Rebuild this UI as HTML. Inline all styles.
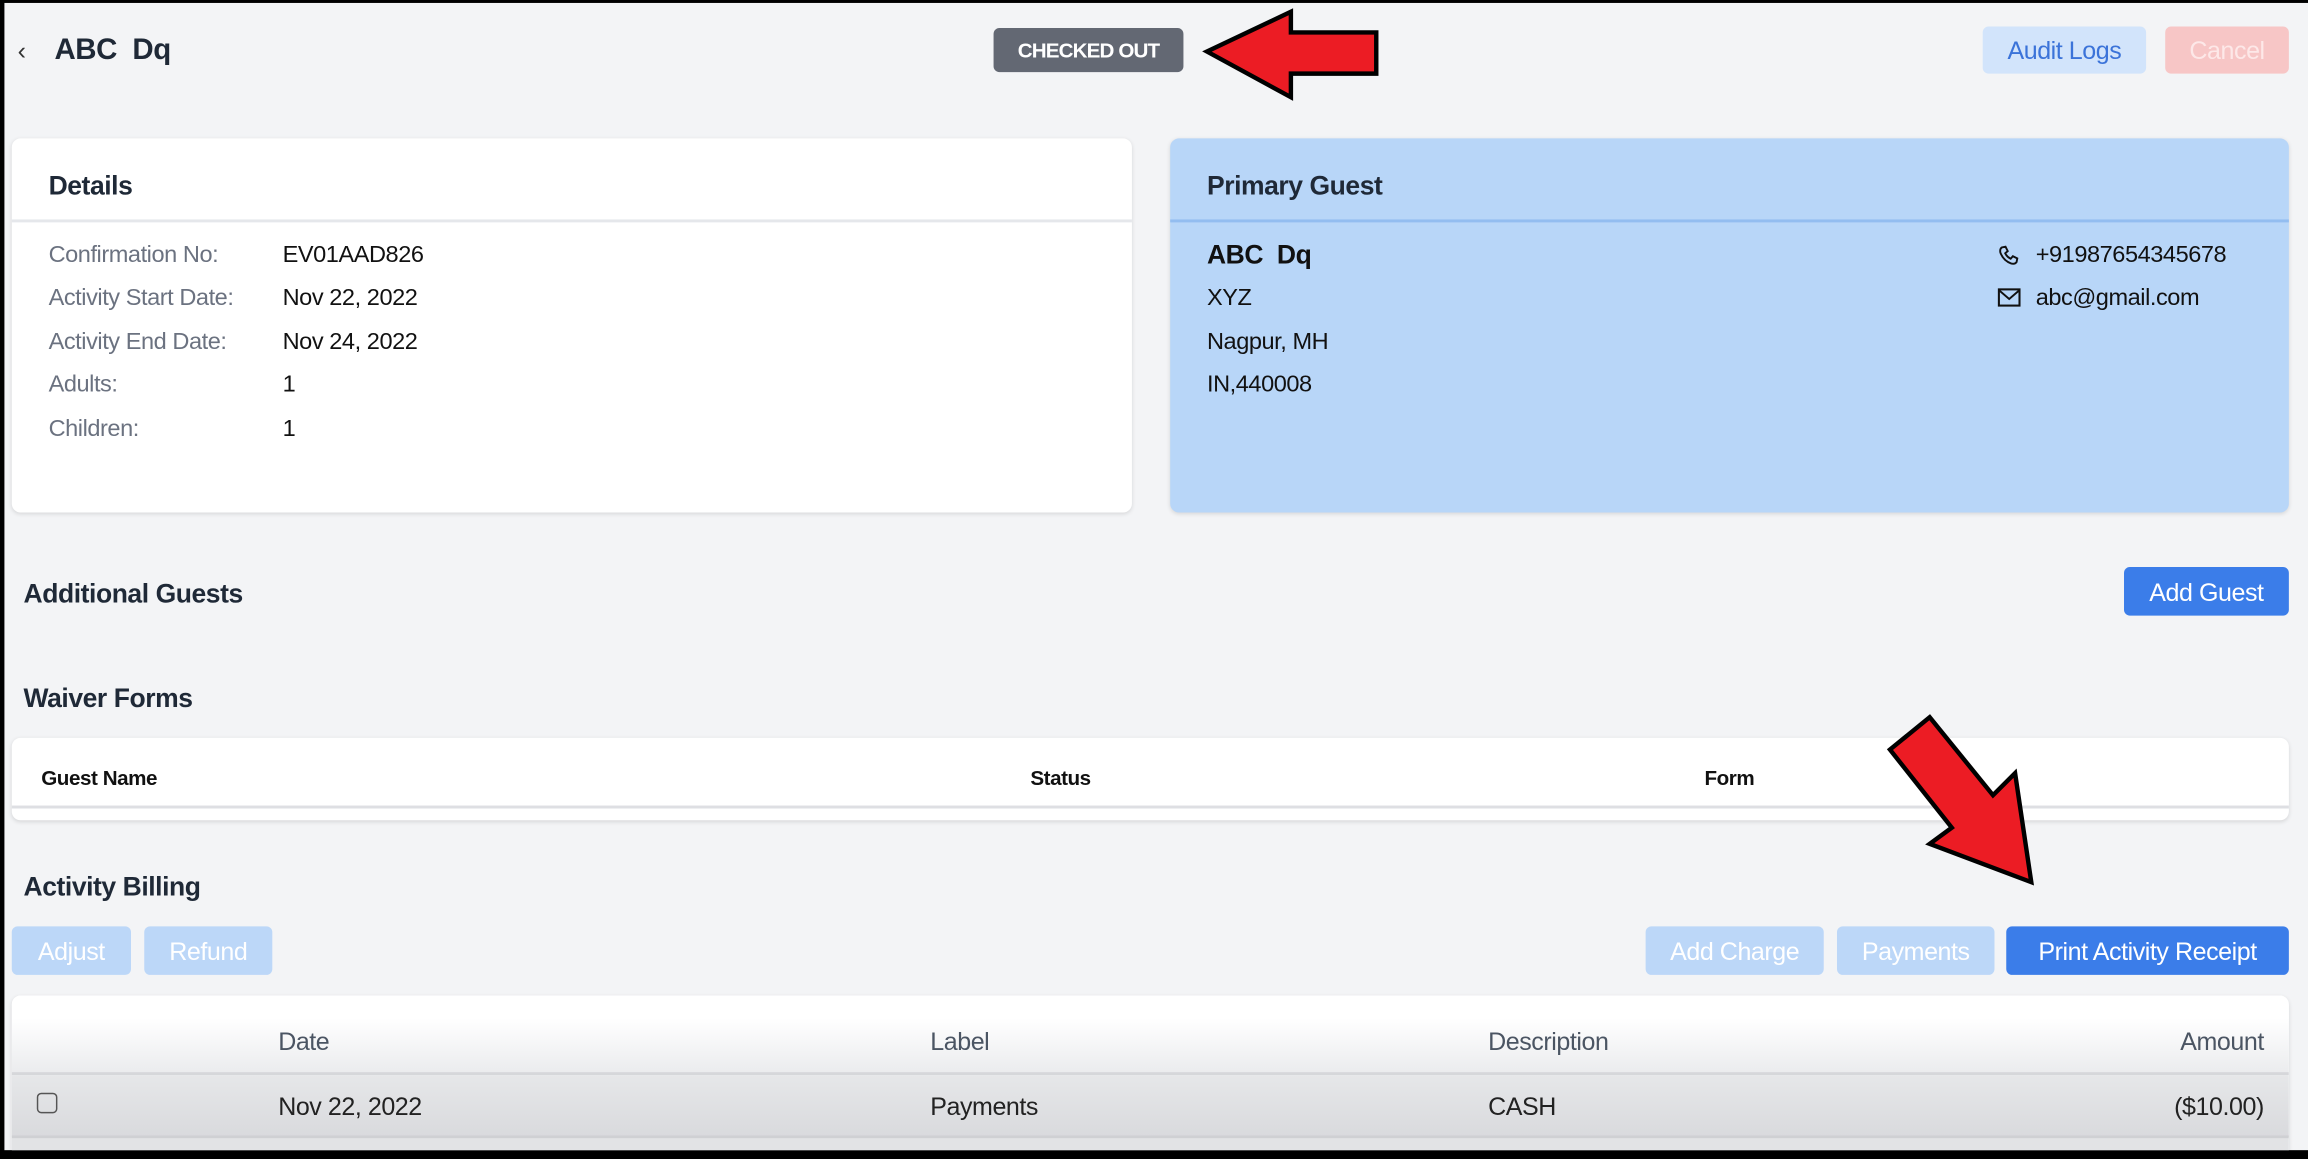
<!DOCTYPE html>
<html><head><meta charset="utf-8"><style>
*{margin:0;padding:0;box-sizing:border-box}
html,body{width:2308px;height:1159px;overflow:hidden;background:#000}
#w{position:absolute;left:0;top:0;width:1568px;height:787px;transform:scale(1.47194,1.47268);transform-origin:0 0;font-family:"Liberation Sans",sans-serif;letter-spacing:-0.3px}
.bg{position:absolute;left:3px;top:2px;width:1565px;height:779px;background:#f3f4f6}
.a{position:absolute;white-space:nowrap}
.card{position:absolute;border-radius:6px;box-shadow:0 1px 3px rgba(0,0,0,.12)}
.btn{position:absolute;border-radius:4px;font-size:17px;display:flex;align-items:center;justify-content:center;color:#fff}
.lb{color:#6b7280;font-size:16px}
.vl{color:#111;font-size:16px}
.h{font-size:18px;font-weight:bold;color:#1f2937}
</style></head><body><div id="w">
<div class="bg"></div>
<div class="a" style="left:12px;top:25px;font-size:17px;color:#333">‹</div>
<div class="a" style="left:37px;top:23px;font-size:20px;font-weight:bold;color:#1f2937">ABC&nbsp; Dq</div>
<div class="btn" style="left:675px;top:19px;width:129px;height:30px;background:#636873;font-size:14px;font-weight:bold;letter-spacing:-0.6px">CHECKED OUT</div>
<div class="btn" style="left:1347px;top:18px;width:111px;height:32px;background:#d2e4fb;color:#3b73d9;padding-top:2px">Audit Logs</div>
<div class="btn" style="left:1471px;top:18px;width:84px;height:32px;background:#f7c6c6;color:#fde8e8;padding-top:2px">Cancel</div>

<div class="card" style="left:8px;top:94px;width:761px;height:254px;background:#fff">
 <div class="a h" style="left:25px;top:22px">Details</div>
 <div style="position:absolute;left:0;top:55px;width:100%;height:2px;background:#e5e7eb"></div>
 <div class="a lb" style="left:25px;top:71px">Confirmation No:</div><div class="a vl" style="left:184px;top:71px">EV01AAD826</div>
 <div class="a lb" style="left:25px;top:100px">Activity Start Date:</div><div class="a vl" style="left:184px;top:100px">Nov 22, 2022</div>
 <div class="a lb" style="left:25px;top:130px">Activity End Date:</div><div class="a vl" style="left:184px;top:130px">Nov 24, 2022</div>
 <div class="a lb" style="left:25px;top:159px">Adults:</div><div class="a vl" style="left:184px;top:159px">1</div>
 <div class="a lb" style="left:25px;top:189px">Children:</div><div class="a vl" style="left:184px;top:189px">1</div>
</div>

<div class="card" style="left:795px;top:94px;width:760px;height:254px;background:#b8d6f8">
 <div class="a h" style="left:25px;top:22px">Primary Guest</div>
 <div style="position:absolute;left:0;top:55px;width:100%;height:2px;background:#93bdf0"></div>
 <div class="a" style="left:25px;top:69px;font-size:18px;font-weight:bold;color:#111">ABC&nbsp; Dq</div>
 <div class="a vl" style="left:25px;top:100px">XYZ</div>
 <div class="a vl" style="left:25px;top:130px">Nagpur, MH</div>
 <div class="a vl" style="left:25px;top:159px">IN,440008</div>
 <svg style="position:absolute;left:562px;top:72px" width="15" height="15" viewBox="0 0 15 15"><path d="M3 2 L5.5 1.5 L7 4.5 L5.3 6 Q6.5 8.5 9 9.7 L10.5 8 L13.5 9.5 L13 12 Q12 13.5 9.5 13 Q4 11 2 5.5 Q1.5 3 3 2Z" fill="none" stroke="#111" stroke-width="1.3"/></svg>
 <div class="a vl" style="left:588px;top:71px">+91987654345678</div>
 <svg style="position:absolute;left:562px;top:101px" width="16" height="14" viewBox="0 0 16 14"><rect x="1" y="1.5" width="14" height="11" fill="none" stroke="#111" stroke-width="1.4"/><path d="M1 2 L8 8 L15 2" fill="none" stroke="#111" stroke-width="1.3"/></svg>
 <div class="a vl" style="left:588px;top:100px">abc@gmail.com</div>
</div>

<div class="a h" style="left:16px;top:393px">Additional Guests</div>
<div class="btn" style="left:1443px;top:385px;width:112px;height:33px;background:#3b7de9;padding-top:2px">Add Guest</div>
<div class="a h" style="left:16px;top:464px">Waiver Forms</div>
<div class="card" style="left:8px;top:501px;width:1547px;height:56px;background:#fff">
 <div class="a" style="left:20px;top:19px;font-size:14px;font-weight:bold;color:#111">Guest Name</div>
 <div class="a" style="left:692px;top:19px;font-size:14px;font-weight:bold;color:#111">Status</div>
 <div class="a" style="left:1150px;top:19px;font-size:14px;font-weight:bold;color:#111">Form</div>
 <div style="position:absolute;left:0;top:46px;width:100%;height:2px;background:#dedfe3"></div>
</div>

<div class="a h" style="left:16px;top:592px">Activity Billing</div>
<div class="btn" style="left:8px;top:629px;width:81px;height:33px;background:#bcd7f8;padding-top:2px">Adjust</div>
<div class="btn" style="left:98px;top:629px;width:87px;height:33px;background:#bcd7f8;padding-top:2px">Refund</div>
<div class="btn" style="left:1118px;top:629px;width:121px;height:33px;background:#bcd7f8;padding-top:2px">Add Charge</div>
<div class="btn" style="left:1248px;top:629px;width:107px;height:33px;background:#bcd7f8;padding-top:2px">Payments</div>
<div class="btn" style="left:1363px;top:629px;width:192px;height:33px;background:#3b7de9;padding-top:2px">Print Activity Receipt</div>

<div class="card" style="left:8px;top:676px;width:1547px;height:105px;background:#fff;overflow:hidden;border-radius:6px 6px 0 0">
 <div style="position:absolute;left:0;top:0;width:100%;height:52px;background:linear-gradient(#fff 30%,#ebecee)"></div>
 <div style="position:absolute;left:0;top:52px;width:100%;height:2px;background:#d6d7da"></div>
 <div style="position:absolute;left:0;top:54px;width:100%;height:42px;background:linear-gradient(#e6e7e9,#d9dadd)"></div>
 <div style="position:absolute;left:0;top:95px;width:100%;height:2px;background:#cfd0d3"></div>
 <div style="position:absolute;left:0;top:97px;width:100%;height:10px;background:#e2e3e5"></div>
 <div class="a" style="left:181px;top:22px;font-size:17px;color:#4b5563">Date</div>
 <div class="a" style="left:624px;top:22px;font-size:17px;color:#4b5563">Label</div>
 <div class="a" style="left:1003px;top:22px;font-size:17px;color:#4b5563">Description</div>
 <div class="a" style="right:17px;top:22px;font-size:17px;color:#4b5563">Amount</div>
 <div style="position:absolute;left:17px;top:66px;width:14px;height:14px;border:1.5px solid #555;border-radius:3px"></div>
 <div class="a" style="left:181px;top:66px;font-size:17px;color:#222">Nov 22, 2022</div>
 <div class="a" style="left:624px;top:66px;font-size:17px;color:#222">Payments</div>
 <div class="a" style="left:1003px;top:66px;font-size:17px;color:#222">CASH</div>
 <div class="a" style="right:17px;top:66px;font-size:17px;color:#222">($10.00)</div>
</div>

<svg style="position:absolute;left:0;top:0" width="1568" height="787">
 <polygon points="820,35 877,8 877,22 935,22 935,50 877,50 877,66" fill="#ec1c24" stroke="#000" stroke-width="3" stroke-linejoin="miter"/>
 <polygon points="1311,487 1284,509 1326,562 1311,573 1380,599 1369,525 1354,540" fill="#ec1c24" stroke="#000" stroke-width="3"/>
</svg>
</div></body></html>
